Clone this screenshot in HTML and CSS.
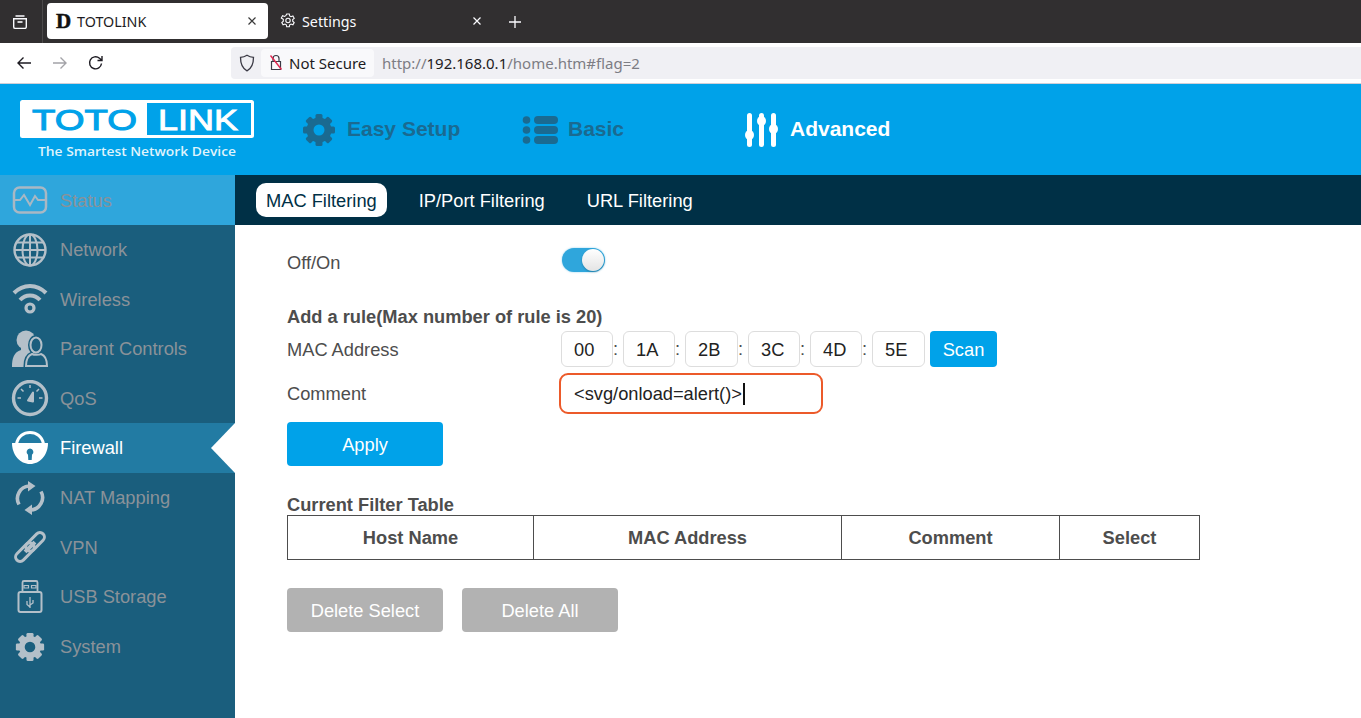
FILE: index.html
```html
<!DOCTYPE html>
<html lang="en">
<head>
<meta charset="utf-8">
<title>TOTOLINK</title>
<link rel="stylesheet" href="styles.css">
</head>
<body>
<div class="tabstrip">
  <div class="view-btn">
    <svg width="18" height="18" viewBox="0 0 18 18" fill="none" stroke="#fbfbfe" stroke-width="1.4"><path d="M4.500 3h9M2.700 5.700h12.600v8.200a1.500 1.500 0 0 1-1.500 1.500H4.200a1.500 1.500 0 0 1-1.500-1.500z"/><path d="M6.500 9h5" stroke-width="1.600"/></svg>
  </div>
  <div class="tab tab-active">
    <span class="favicon">D</span><span class="tab-title">TOTOLINK</span>
    <svg class="tab-close" width="10" height="10" viewBox="0 0 10 10" stroke="#3a3a3a" stroke-width="1.2"><path d="M1.500 1.500l7 7M8.500 1.500l-7 7"/></svg>
  </div>
  <div class="tab">
    <svg class="tab-gear" width="16" height="16" viewBox="0 0 16 16" fill="none" stroke="#fbfbfe" stroke-width="1.1"><path d="M6.700 1h2.600l.4 2 1.300.7 1.900-.7 1.300 2.300-1.500 1.300v1.600l1.500 1.300-1.300 2.300-1.900-.7-1.300.7-.4 2H6.700l-.4-2-1.300-.7-1.900.7-1.300-2.300 1.500-1.300V6.300L1.300 5l1.300-2.300 1.900.7 1.300-.7z"/><circle cx="8" cy="7.500" r="2.200"/></svg>
    <span class="tab-title">Settings</span>
    <svg class="tab-close" width="10" height="10" viewBox="0 0 10 10" stroke="#fbfbfe" stroke-width="1.2"><path d="M1.500 1.500l7 7M8.500 1.500l-7 7"/></svg>
  </div>
  <svg class="new-tab" width="14" height="14" viewBox="0 0 14 14" stroke="#fbfbfe" stroke-width="1.3"><path d="M7 1v12M1 7h12"/></svg>
</div>

<div class="toolbar">
  <div class="nav-btns">
    <svg width="16" height="16" viewBox="0 0 16 16" fill="none" stroke="#1d1b22" stroke-width="1.4"><path d="M15 8H2M7.500 2.500L2 8l5.500 5.500"/></svg>
    <svg width="16" height="16" viewBox="0 0 16 16" fill="none" stroke="#a3a3a8" stroke-width="1.4"><path d="M1 8h13M8.500 2.500L14 8l-5.500 5.500"/></svg>
    <svg width="16" height="16" viewBox="0 0 16 16" fill="none" stroke="#1d1b22" stroke-width="1.4"><path d="M13.500 8.500a6 6 0 1 1-2-5.200L14 5.500M14 1v4.500H9.500"/></svg>
  </div>
  <div class="urlbar">
    <svg class="shield" width="16" height="18" viewBox="0 0 16 18" fill="none" stroke="#3a3944" stroke-width="1.3"><path d="M8 1.200c2 1.300 4.300 2 6.500 2.100 0 6-1 10.800-6.500 13.500C2.500 14.100 1.500 9.300 1.500 3.300 3.700 3.200 6 2.500 8 1.200z"/></svg>
    <div class="secure-chip">
      <svg width="14" height="17" viewBox="0 0 14 17" fill="none"><path d="M4 7V4.500a3 3 0 0 1 6 0V7M2.500 7.500h9v8h-9z" stroke="#3a3944" stroke-width="1.2"/><path d="M1.500 1.500l11 14" stroke="#e22850" stroke-width="1.4"/></svg>
      <span>Not Secure</span>
    </div>
    <div class="url"><span class="url-dim">http://</span>192.168.0.1<span class="url-dim">/home.htm#flag=2</span></div>
  </div>
</div>

<header class="app-header">
  <div class="logo">
    <svg width="236" height="62" viewBox="0 0 236 62">
      <rect x="1" y="0" width="234" height="38" rx="2.500" fill="#fff"/>
      <rect x="128" y="3" width="104" height="32" fill="#00a2e9"/>
      <text class="logo-toto" x="13" y="30" textLength="105" lengthAdjust="spacingAndGlyphs">TOTO</text>
      <text class="logo-link" x="139" y="30" textLength="80" lengthAdjust="spacingAndGlyphs">LINK</text>
      <text class="logo-tag" x="19" y="56" textLength="198" lengthAdjust="spacingAndGlyphs">The Smartest Network Device</text>
    </svg>
  </div>
  <nav class="topnav">
    <a class="topnav-item item-easy">
      <svg width="34" height="34" viewBox="0 0 34 34"><g fill="#1a6a91"><rect x="13.500" y="1" width="7" height="32" rx="1.500"/><rect x="13.500" y="1" width="7" height="32" rx="1.500" transform="rotate(45 17 17)"/><rect x="13.500" y="1" width="7" height="32" rx="1.500" transform="rotate(90 17 17)"/><rect x="13.500" y="1" width="7" height="32" rx="1.500" transform="rotate(135 17 17)"/><circle cx="17" cy="17" r="12.500"/></g><circle cx="17" cy="17" r="5.500" fill="#00a2e9"/></svg>
      <span class="topnav-label">Easy Setup</span>
    </a>
    <a class="topnav-item item-basic">
      <svg width="36" height="30" viewBox="0 0 36 30" fill="#1a6a91"><circle cx="4.500" cy="5" r="3.800"/><circle cx="4.500" cy="15" r="3.800"/><circle cx="4.500" cy="25" r="3.800"/><rect x="12" y="1" width="24" height="8" rx="4"/><rect x="12" y="11" width="24" height="8" rx="4"/><rect x="12" y="21" width="24" height="8" rx="4"/></svg>
      <span class="topnav-label">Basic</span>
    </a>
    <a class="topnav-item item-adv">
      <svg width="34" height="36" viewBox="0 0 34 36" fill="#fff"><rect x="3" y="1" width="5" height="34" rx="2.500"/><rect x="15" y="1" width="5" height="34" rx="2.500"/><rect x="27" y="1" width="5" height="34" rx="2.500"/><ellipse cx="5.500" cy="23" rx="4.500" ry="5"/><ellipse cx="17.500" cy="9" rx="4.500" ry="5"/><ellipse cx="29.500" cy="17" rx="4.500" ry="5"/></svg>
      <span class="topnav-label">Advanced</span>
    </a>
  </nav>
</header>

<div class="main">
  <aside class="sidebar">
    <ul class="menu">
      <li class="menu-item menu-status">
        <span class="menu-icon"><svg width="36" height="30" viewBox="0 0 36 30" fill="none" stroke="#a9b8c4" stroke-width="2.500"><rect x="2" y="2.500" width="32" height="25" rx="5.500"/><path d="M2 15h6l4-5 6 10 5-9 3 4h8" stroke-width="2"/></svg></span>
        <span class="menu-label">Status</span>
      </li>
      <li class="menu-item">
        <span class="menu-icon"><svg width="34" height="34" viewBox="0 0 34 34" fill="none" stroke="#b4c0c9" stroke-width="2"><circle cx="17" cy="17" r="15.500" stroke-width="2.400"/><ellipse cx="17" cy="17" rx="7.500" ry="15.500"/><path d="M17 1.500v31M1.500 17h31M3.500 9.500h27M3.500 24.500h27"/></svg></span>
        <span class="menu-label">Network</span>
      </li>
      <li class="menu-item">
        <span class="menu-icon"><svg width="36" height="32" viewBox="0 0 36 32" fill="none" stroke="#b4c0c9" stroke-width="4"><path d="M2 10C11 .5 25 .5 34 10M8 17c5.500-6 14.500-6 20 0"/><circle cx="18" cy="25" r="4" stroke-width="3.200"/></svg></span>
        <span class="menu-label">Wireless</span>
      </li>
      <li class="menu-item">
        <span class="menu-icon"><svg width="36" height="38" viewBox="0 0 36 38"><g fill="#b4c0c9"><circle cx="14" cy="10" r="9.500"/><path d="M9 16h10l3 6-6 15H0c0-9 2-15 9-17z"/></g><g fill="#1a5e7d" stroke="#1a5e7d" stroke-width="5"><ellipse cx="24" cy="15" rx="5.500" ry="7.500"/><path d="M20 24c-4 1.500-6 5-6 12h21c0-7-2-10.500-6-12z"/></g><g fill="#1a5e7d" stroke="#b4c0c9" stroke-width="2"><ellipse cx="24" cy="15" rx="5.500" ry="7.500"/><path d="M20 24c-4 1.500-6 5-6 12h21c0-7-2-10.500-6-12-1.500 1-7 1-9 0z"/></g></svg></span>
        <span class="menu-label">Parent Controls</span>
      </li>
      <li class="menu-item">
        <span class="menu-icon"><svg width="38" height="38" viewBox="0 0 38 38" fill="none" stroke="#b4c0c9"><circle cx="19" cy="18" r="16.500" stroke-width="3.400"/><path d="M19 5v3M6.500 18h3.500M28 18h3.500M10 9l2.500 2.500M28 9l-2.500 2.500" stroke-width="1.500"/><path d="M17 20.500l5-8 0 9z" fill="#b4c0c9" stroke-width="2" stroke-linejoin="round"/></svg></span>
        <span class="menu-label">QoS</span>
      </li>
      <li class="menu-item menu-active">
        <span class="menu-icon"><svg width="36" height="36" viewBox="0 0 36 36"><path fill="none" stroke="#fff" stroke-width="3" d="M4.500 14C6 6 12 2.500 18 2.500S30 6 31.500 14"/><path fill="#fff" d="M0 13h36c0 12-8 21-18 21S0 25 0 13z"/><path fill="#227ba3" d="M18 18.500a3.500 3.500 0 0 1 2 6.300l-.3 5.200h-3.400l-.3-5.200a3.500 3.500 0 0 1 2-6.300z"/></svg></span>
        <span class="menu-label">Firewall</span>
      </li>
      <li class="menu-item">
        <span class="menu-icon"><svg width="32" height="34" viewBox="0 0 32 34" fill="none" stroke="#b4c0c9" stroke-width="3.600"><path d="M5 23.500A12.500 12.500 0 0 1 15 5M27 10.500A12.500 12.500 0 0 1 17 29"/><path d="M14 0l7.500 5L14 10.500zM18 23.500L10.500 29l7.500 5z" fill="#b4c0c9" stroke="none"/></svg></span>
        <span class="menu-label">NAT Mapping</span>
      </li>
      <li class="menu-item">
        <span class="menu-icon"><svg width="34" height="34" viewBox="0 0 34 34" fill="none" stroke="#b4c0c9" stroke-width="3"><g transform="rotate(-45 17 17)"><rect x="-1.500" y="12.500" width="22.500" height="9" rx="4.500"/><rect x="13" y="12.500" width="22.500" height="9" rx="4.500"/><path d="M10 17h14" stroke-width="4"/></g></svg></span>
        <span class="menu-label">VPN</span>
      </li>
      <li class="menu-item">
        <span class="menu-icon"><svg width="26" height="33" viewBox="0 0 26 33" fill="none" stroke="#b4c0c9" stroke-width="1.800"><path d="M5.500 12V2.500a1.500 1.500 0 0 1 1.500-1.500h12a1.500 1.500 0 0 1 1.500 1.500V12"/><rect x="1.500" y="12" width="23" height="20" rx="2" stroke-width="2"/><path d="M7 5.500h4.500v2.500H7zM14.500 5.500H19v2.500h-4.500z" stroke-width="1.200"/><path d="M13 17v11M13 27l-3-2.500v-3.500M13 25l3-2v-3" stroke-width="1.300"/></svg></span>
        <span class="menu-label">USB Storage</span>
      </li>
      <li class="menu-item">
        <span class="menu-icon"><svg width="30" height="30" viewBox="0 0 34 34"><g fill="#b4c0c9"><rect x="13" y="1" width="8" height="32" rx="1.500"/><rect x="13" y="1" width="8" height="32" rx="1.500" transform="rotate(45 17 17)"/><rect x="13" y="1" width="8" height="32" rx="1.500" transform="rotate(90 17 17)"/><rect x="13" y="1" width="8" height="32" rx="1.500" transform="rotate(135 17 17)"/><circle cx="17" cy="17" r="12.500"/></g><circle cx="17" cy="17" r="6" fill="#1a5e7d"/></svg></span>
        <span class="menu-label">System</span>
      </li>
    </ul>
  </aside>

  <main class="content">
    <div class="subnav">
      <a class="subnav-item subnav-active">MAC Filtering</a>
      <a class="subnav-item">IP/Port Filtering</a>
      <a class="subnav-item">URL Filtering</a>
    </div>
    <div class="panel">
      <div class="row row-toggle">
        <label class="row-label">Off/On</label>
        <span class="toggle"><span class="knob"></span></span>
      </div>
      <div class="heading">Add a rule(Max number of rule is 20)</div>
      <div class="row row-mac">
        <label class="row-label">MAC Address</label>
        <div class="octets">
          <div class="octet">00</div><span class="colon">:</span>
          <div class="octet">1A</div><span class="colon">:</span>
          <div class="octet octet-wide">2B</div><span class="colon">:</span>
          <div class="octet">3C</div><span class="colon">:</span>
          <div class="octet">4D</div><span class="colon">:</span>
          <div class="octet octet-wide">5E</div>
          <button class="btn btn-scan">Scan</button>
        </div>
      </div>
      <div class="row row-comment">
        <label class="row-label">Comment</label>
        <div class="comment-input">&lt;svg/onload=alert()&gt;<span class="caret"></span></div>
      </div>
      <button class="btn btn-wide btn-apply">Apply</button>
      <div class="heading heading-table">Current Filter Table</div>
      <table class="filter-table">
        <thead>
          <tr>
            <th class="col-host">Host Name</th>
            <th class="col-mac">MAC Address</th>
            <th class="col-comment">Comment</th>
            <th class="col-select">Select</th>
          </tr>
        </thead>
      </table>
      <div class="actions">
        <button class="btn btn-wide btn-muted">Delete Select</button>
        <button class="btn btn-wide btn-muted">Delete All</button>
      </div>
    </div>
  </main>
</div>
</body>
</html>
```
FILE: styles.css
```css
* { box-sizing: border-box; }
html, body { margin: 0; height: 718px; overflow: hidden; background: #fff; }
body { display: flex; flex-direction: column; font-family: "Liberation Sans", Arial, sans-serif; color: #4d4d4d; }

/* browser chrome */
.tabstrip { height: 43px; flex: none; background: #312f30; display: flex; align-items: flex-start; font-family: "Noto Sans", sans-serif; font-size: 14.3px; }
.view-btn { width: 43px; height: 43px; border-right: 1px solid #4c4a4b; display: flex; align-items: center; justify-content: center; padding-right: 2px; }
.tab { width: 221px; height: 36px; margin-top: 3px; margin-left: 4px; border-radius: 4px; display: flex; align-items: center; padding: 0 11px 0 9px; color: #fbfbfe; }
.tab + .tab { margin-left: 0; padding-left: 12px; padding-right: 0; }
.tab + .tab .tab-close { margin-right: 7px; }
.tab-active { background: #fff; color: #1d1b22; }
.favicon { font-family: "Liberation Serif", serif; font-weight: 700; font-size: 21px; line-height: 1; width: 21px; color: #111; -webkit-text-stroke: .5px #111; }
.tab-title { flex: 1; }
.tab-gear { margin-right: 6px; }
.new-tab { margin: 15px 0 0 19px; }

.toolbar { height: 41px; flex: none; background: #fff; border-bottom: 1px solid #cfcfd8; display: flex; align-items: center; padding-bottom: 1px; font-family: "Noto Sans", sans-serif; font-size: 15px; }
.nav-btns { width: 231px; display: flex; gap: 20px; padding-left: 16px; }
.urlbar { flex: 1; height: 32px; background: #f0f0f4; border-radius: 4px 0 0 4px; display: flex; align-items: center; padding: 0 8px; }
.secure-chip { margin-left: 6px; height: 28px; width: 113px; border-radius: 4px; background: #f9f9fb; display: flex; align-items: center; gap: 6px; padding-left: 8px; color: #1d1b22; }
.url { margin-left: 8px; color: #1d1b22; }
.url-dim { color: #7d7d84; }

/* app header */
.app-header { height: 91px; flex: none; background: #00a2e9; display: flex; }
.logo { width: 283px; padding: 16px 0 0 19px; }
.logo svg { display: block; }
.logo-toto { font: 400 30px "Liberation Sans", sans-serif; fill: #00a2e9; stroke: #00a2e9; stroke-width: 1; }
.logo-link { font: 400 30px "Liberation Sans", sans-serif; fill: #fff; stroke: #fff; stroke-width: .9; }
.logo-tag { font: 600 13px "Open Sans", sans-serif; fill: #dff3fc; }
.topnav { flex: 1; display: flex; }
.topnav-item { display: flex; align-items: center; font-size: 21px; font-weight: 700; color: #1a6a91; }
.topnav-label { padding-bottom: 2px; }
.item-easy { width: 220px; gap: 11px; padding-left: 19px; }
.item-basic { width: 241px; gap: 10px; padding-left: 19px; }
.item-adv { color: #fff; gap: 12px; }

/* layout */
.main { flex: 1; display: flex; min-height: 0; }
.sidebar { width: 235px; flex: none; background: #1a5e7d; font-size: 18.3px; color: #8a9299; }
.menu { list-style: none; margin: 0; padding: 0; }
.menu-item { position: relative; height: 49.6px; display: flex; align-items: center; }
.menu-icon { width: 60px; height: 100%; flex: none; display: flex; align-items: center; justify-content: center; }
.menu-label { padding-top: .6px; }
.menu-status { background: #2fa6dc; height: 50px; }
.menu-status .menu-label { padding-top: 2px; }
.menu-active { background: #227ba3; color: #fff; }
.menu-active::after { content: ""; position: absolute; right: 0; top: 0; border-style: solid; border-width: 25px 24px 25px 0; border-color: transparent #fff transparent transparent; }

.content { flex: 1; min-width: 0; }
.subnav { height: 50px; background: #003046; display: flex; align-items: center; padding-left: 21px; gap: 11px; font-size: 18.3px; color: #fff; }
.subnav-item { height: 34px; line-height: 36px; padding: 0 10px; border-radius: 10px; margin-right: 11px; }
.subnav-active { background: #fff; color: #003046; }

.panel { padding: 0 0 0 52px; font-size: 18.25px; }
.row { display: flex; align-items: center; }
.row-label { width: 274px; flex: none; }
.row-toggle { height: 24px; margin-top: 23px; }
.row-toggle .row-label { padding-top: 5px; }
.toggle { width: 43px; height: 24px; margin-left: 1px; border-radius: 12px; background: #2fa6dc; position: relative; box-shadow: 0 0 2px rgba(47,166,220,.6); }
.knob { position: absolute; right: 1px; top: 1px; width: 22px; height: 22px; border-radius: 50%; background: linear-gradient(#fff, #e4e4e4); box-shadow: 0 1px 2px rgba(0,0,0,.25); }
.heading { font-weight: 700; margin-top: 34px; line-height: 22px; }
.row-mac { margin-top: 3px; height: 36px; }
.row-mac .row-label { padding-top: 2px; }
.octets { display: flex; align-items: center; color: #222; }
.octet { width: 52px; height: 36px; border: 1px solid #ddd; border-radius: 6px; line-height: 36px; padding-left: 12px; color: #222; }
.octet-wide { width: 53px; }
.colon { width: 10px; color: #4d4d4d; }
.btn { border: 0; padding: 2px 0 0; font: inherit; color: #fff; border-radius: 4px; background: #00a2e9; display: block; }
.btn-scan { width: 67px; height: 36px; margin-left: 5px; }
.row-comment { margin-top: 6px; height: 41px; }
.row-comment .row-label { width: 272px; }
.comment-input { width: 264px; height: 41px; border: 2px solid #ec5a2a; border-radius: 9px; padding-left: 13px; display: flex; align-items: center; color: #222; }
.caret { width: 2px; height: 22px; background: #111; margin-left: 1px; }
.btn-wide { width: 156px; height: 44px; }
.btn-apply { margin-top: 8px; }
.heading-table { margin-top: 28px; line-height: 21px; height: 21px; }
.filter-table { border-collapse: collapse; width: 913px; table-layout: fixed; }
.filter-table th { height: 44px; border: 1px solid #4d4d4d; padding: 0; font-weight: 700; text-align: center; }
.col-host { width: 246px; }
.col-mac { width: 308px; }
.col-comment { width: 218px; }
.actions { display: flex; gap: 19px; margin-top: 28px; }
.btn-muted { background: #b2b2b2; }
```
